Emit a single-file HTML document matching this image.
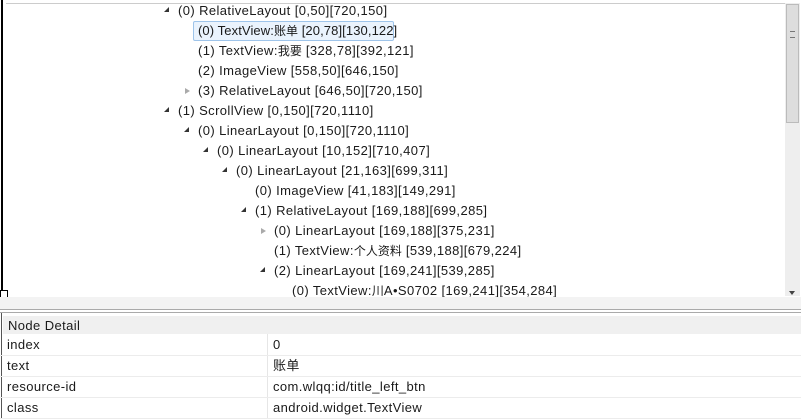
<!DOCTYPE html><html><head><meta charset="utf-8"><style>
body{margin:0;width:801px;height:418px;overflow:hidden;background:#fff;font-family:"Liberation Sans","Noto Sans CJK SC",sans-serif;font-size:13px;letter-spacing:0.4px;color:#1a1a1a;position:relative}
.c{font-size:12px;letter-spacing:0}
.r{position:absolute;white-space:nowrap;line-height:20px;height:20px}
.t{position:absolute;width:0;height:0}
.o{border-top:3px solid transparent;border-bottom:3px solid transparent;border-left:5px solid #aaa;width:0;height:0}
.f{border-left:5px solid transparent;border-bottom:5px solid #333;width:0;height:0}
.a{position:absolute;left:0;right:0;height:21px;border-bottom:1px solid #ececec;line-height:21px}
.a span{position:absolute}
</style></head><body>
<div style="position:absolute;left:1px;top:0;width:2px;height:296px;background:#000"></div>
<div style="position:absolute;left:0;top:290px;width:6px;height:6px;border:1px solid #000;background:#fff"></div>
<div style="position:absolute;left:6px;top:3px;width:779px;height:1px;background:#ccc"></div>
<div style="position:absolute;left:785px;top:3px;width:15px;height:293px;background:#eee"></div>
<div style="position:absolute;left:786px;top:4px;width:13px;height:119px;background:#ddd;border:1px solid #bbb;box-sizing:border-box"></div>
<div style="position:absolute;left:790px;top:31px;width:5px;height:5px;border-top:1px solid #777;border-bottom:1px solid #777"></div>
<div style="position:absolute;left:789px;top:291px;border-left:3px solid transparent;border-right:3px solid transparent;border-top:4px solid #444"></div>

<div class="t f" style="left:164px;top:7px"></div><div class="r" style="left:178px;top:1px">(0) RelativeLayout [0,50][720,150]</div>
<div style="position:absolute;left:193px;top:21px;width:199px;height:18px;border:1px solid #9ec4ea;border-radius:2px;background:#eaf3fd"></div>
<div class="r" style="left:198px;top:21px;letter-spacing:0.1px">(0) TextView:<span class="c">账单</span> [20,78][130,122]</div>
<div class="r" style="left:198px;top:41px">(1) TextView:<span class="c">我要</span> [328,78][392,121]</div>
<div class="r" style="left:198px;top:61px">(2) ImageView [558,50][646,150]</div>
<div class="t o" style="left:185px;top:88px"></div><div class="r" style="left:198px;top:81px">(3) RelativeLayout [646,50][720,150]</div>
<div class="t f" style="left:164px;top:107px"></div><div class="r" style="left:178px;top:101px">(1) ScrollView [0,150][720,1110]</div>
<div class="t f" style="left:184px;top:127px"></div><div class="r" style="left:198px;top:121px">(0) LinearLayout [0,150][720,1110]</div>
<div class="t f" style="left:203px;top:147px"></div><div class="r" style="left:217px;top:141px">(0) LinearLayout [10,152][710,407]</div>
<div class="t f" style="left:222px;top:167px"></div><div class="r" style="left:236px;top:161px">(0) LinearLayout [21,163][699,311]</div>
<div class="r" style="left:255px;top:181px">(0) ImageView [41,183][149,291]</div>
<div class="t f" style="left:241px;top:207px"></div><div class="r" style="left:255px;top:201px">(1) RelativeLayout [169,188][699,285]</div>
<div class="t o" style="left:261px;top:228px"></div><div class="r" style="left:274px;top:221px">(0) LinearLayout [169,188][375,231]</div>
<div class="r" style="left:274px;top:241px">(1) TextView:<span class="c">个人资料</span> [539,188][679,224]</div>
<div class="t f" style="left:260px;top:267px"></div><div class="r" style="left:274px;top:261px">(2) LinearLayout [169,241][539,285]</div>
<div class="r" style="left:292px;top:281px">(0) TextView:<span class="c">川</span>A•S0702 [169,241][354,284]</div>

<div style="position:absolute;left:0;top:297px;width:801px;height:12px;background:#f3f3f3"></div>
<div style="position:absolute;left:0;top:309px;width:801px;height:1px;background:#aaa"></div>
<div style="position:absolute;left:0;top:312px;width:801px;height:1px;background:#aaa"></div>
<div style="position:absolute;left:0;top:313px;width:801px;height:105px;box-sizing:border-box">
<div style="position:absolute;left:1px;top:0;width:1px;height:105px;background:#555"></div>
<div style="position:absolute;left:3px;right:0;top:3px;height:18px;background:#f0f0f0;line-height:20px;padding-left:5px">Node Detail</div>
<div style="position:absolute;left:267px;top:21px;width:1px;height:84px;background:#e6e6e6"></div>
<div class="a" style="top:21px"><span style="left:7px">index</span><span style="left:273px">0</span></div>
<div class="a" style="top:42px"><span style="left:7px">text</span><span style="left:273px">账单</span></div>
<div class="a" style="top:63px"><span style="left:7px">resource-id</span><span style="left:273px">com.wlqq:id/title_left_btn</span></div>
<div class="a" style="top:84px"><span style="left:7px">class</span><span style="left:273px">android.widget.TextView</span></div>
</div>
</body></html>
